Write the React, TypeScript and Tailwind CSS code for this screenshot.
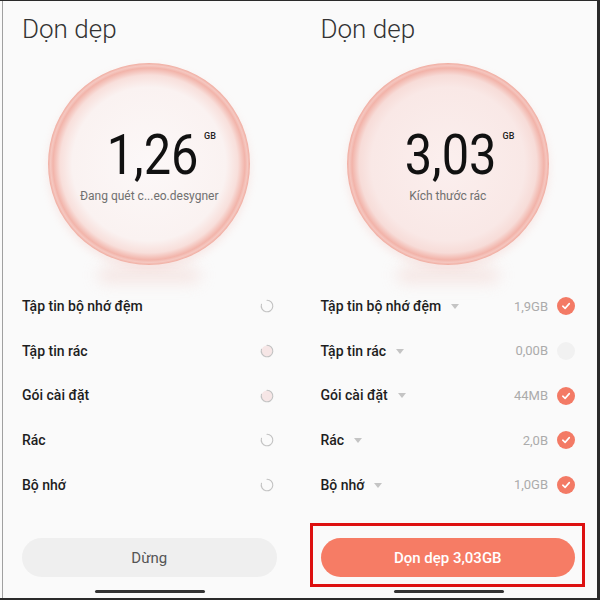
interface Row {
  name: string
  size: string
  checked: boolean
  tint?: boolean
}

const rows: Row[] = [
  { name: 'Tập tin bộ nhớ đệm', size: '1,9GB', checked: true },
  { name: 'Tập tin rác', size: '0,00B', checked: false, tint: true },
  { name: 'Gói cài đặt', size: '44MB', checked: true, tint: true },
  { name: 'Rác', size: '2,0B', checked: true },
  { name: 'Bộ nhớ', size: '1,0GB', checked: true },
]

function Spinner({ tint }: { tint?: boolean }) {
  return (
    <svg width="14" height="14" viewBox="0 0 14 14">
      {tint && <circle cx="7" cy="7" r="5.5" fill="#f6e6e6" />}
      <path d="M7 1.2 A5.8 5.8 0 1 1 1.5 5.2" fill="none" stroke="#c2c2c2" strokeWidth="1.1" strokeLinecap="round" />
    </svg>
  )
}

function Check({ on }: { on: boolean }) {
  if (!on) return <div className="w-[18px] h-[18px] rounded-full bg-[#f1f1f1]" />
  return (
    <div className="w-[18px] h-[18px] rounded-full bg-[#f37a65] flex items-center justify-center">
      <svg width="10" height="10" viewBox="0 0 10 10">
        <path d="M1.8 5.2 L4.1 7.4 L8.3 2.6" fill="none" stroke="#fff" strokeWidth="1.6" strokeLinecap="round" strokeLinejoin="round" />
      </svg>
    </div>
  )
}

function Bubble({ value, caption, pink }: { value: string; caption: string; pink?: boolean }) {
  return (
    <div className="relative w-[202px] h-[202px] mx-auto">
      <div className="absolute left-[50px] top-[205px] w-[102px] h-[14px] rounded-full bg-[#f1d3cf] blur-[8px] opacity-60" />
      <div
        className={`relative w-full h-full rounded-full flex flex-col items-center justify-center shadow-[0_4px_8px_rgba(238,160,150,0.2)] ${
          pink
            ? 'bg-[radial-gradient(circle_closest-side,#fbefee_0%,#f9e8e6_76%,#f7dcd8_88%,#f2b3a9_95%,#f5c6bf_97.5%,#f0ab9f_100%)]'
            : 'bg-[radial-gradient(circle_closest-side,#fcf8f8_0%,#faf2f1_76%,#f8dfdb_88%,#f2b4aa_95%,#f5c8c1_97.5%,#f0aca0_100%)]'
        }`}
      >
        <div className="relative flex items-start mt-[6px] pl-[10px]">
          <span className="text-[56px] leading-[52px] font-normal text-[#111] scale-x-[0.87] origin-right">{value}</span>
          <span className="text-[9px] font-medium text-[#222] ml-[6px] mt-[1px]">GB</span>
        </div>
        <p className="relative text-[12px] text-[#707070] mt-[6px]">{caption}</p>
      </div>
    </div>
  )
}

function Panel({ done }: { done: boolean }) {
  return (
    <div className="relative w-[300px] h-full flex flex-col">
      <h1 className="ml-[22px] mt-[12px] text-[26px] leading-[32px] font-light text-[#333]">Dọn dẹp</h1>
      <div className="mt-[18px]">
        {done ? <Bubble value="3,03" caption="Kích thước rác" pink /> : <Bubble value="1,26" caption="Đang quét c...eo.desygner" />}
      </div>
      <div className="mt-[19px] flex flex-col">
        {rows.map(r => (
          <div key={r.name} className="h-[44.7px] flex items-center pl-[22px] pr-[22px]">
            <span className="text-[14px] font-medium text-[#1e1e1e]">{r.name}</span>
            {done && <span className="ml-[10px] w-0 h-0 border-l-[4px] border-r-[4px] border-t-[5px] border-l-transparent border-r-transparent border-t-[#c4c4c4]" />}
            <div className="flex-1" />
            {done ? (
              <div className="flex items-center gap-[9px]">
                <span className="text-[13px] text-[#ababab]">{r.size}</span>
                <Check on={r.checked} />
              </div>
            ) : (
              <div className="mr-[3px]"><Spinner tint={r.tint} /></div>
            )}
          </div>
        ))}
      </div>
      <div className="mt-[31px] px-[22px]">
        {done ? (
          <div className="relative">
            <div className="absolute -left-[11px] -right-[10px] -top-[15px] -bottom-[10px] border-[3px] border-[#dd1010]" />
            <button className="w-full h-[39px] rounded-full bg-[#f67c65] text-white text-[15px] font-medium">Dọn dẹp 3,03GB</button>
          </div>
        ) : (
          <button className="w-full h-[39px] rounded-full bg-[#efefef] text-[#555] text-[15px]">Dừng</button>
        )}
      </div>
      <div className="absolute bottom-[5px] left-[95px] w-[110px] h-[3px] rounded-full bg-[#333]" />
    </div>
  )
}

export default function App() {
  return (
    <div className="relative w-[600px] h-[600px] bg-[#fafafa] border-t border-b-2 border-r-[3px] border-[#2a2a2a] flex font-['Roboto',sans-serif] overflow-hidden">
      <Panel done={false} />
      <Panel done />
      <div className="absolute left-[2px] top-0 bottom-0 w-px bg-[#a0a0a0]" />
    </div>
  )
}
